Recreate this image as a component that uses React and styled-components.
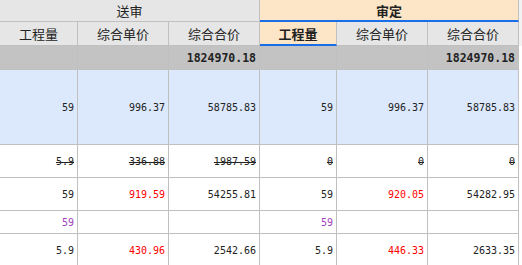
import styled, { createGlobalStyle } from "styled-components";

const GlobalStyle = createGlobalStyle`
  html, body {
    margin: 0;
    padding: 0;
    background: #ffffff;
  }
`;

const colors = {
  GRID: "#c0c0c0",
  HEAD: "#e6e6e6",
  ORANGE: "#fde6c8",
  BLUE_LINE: "#1a6ee8",
  TOTAL: "#c3c3c3",
  SELECTED: "#dce8fc",
  TEXT: "#222222",
  RED: "#ff0000",
  PURPLE: "#a040bc",
};

const rows = [
  { height: 75, selected: true, cells: ["59", "996.37", "58785.83", "59", "996.37", "58785.83"] },
  { height: 33, strike: true, cells: ["5.9", "336.88", "1987.59", "0", "0", "0"] },
  { height: 33, cells: ["59", "919.59", "54255.81", "59", "920.05", "54282.95"], red: [1, 4] },
  { height: 23, cells: ["59", "", "", "59", "", ""], purple: [0, 3] },
  { height: 33, cells: ["5.9", "430.96", "2542.66", "5.9", "446.33", "2633.35"], red: [1, 4] },
];

const widths = [78, 91, 91, 77, 91, 91, 40];

export default function App() {
  return (
    <>
      <GlobalStyle />
      <Wrapper>
        <Table>
          <colgroup>
            {widths.map((w, index) => (
              <col key={index} style={{ width: w }} />
            ))}
          </colgroup>
          <thead>
            <tr style={{ height: 22 }}>
              <GroupHead colSpan={3}>送审</GroupHead>
              <GroupHead colSpan={3} $active>
                审定
              </GroupHead>
              <Filler />
            </tr>
            <tr style={{ height: 24 }}>
              <ColHead>工程量</ColHead>
              <ColHead>综合单价</ColHead>
              <ColHead>综合合价</ColHead>
              <ColHead $active>工程量</ColHead>
              <ColHead>综合单价</ColHead>
              <ColHead>综合合价</ColHead>
              <Filler />
            </tr>
          </thead>
          <tbody>
            <tr style={{ height: 24 }}>
              <TotalCell />
              <TotalCell />
              <TotalCell>1824970.18</TotalCell>
              <TotalCell />
              <TotalCell />
              <TotalCell>1824970.18</TotalCell>
              <BodyFiller />
            </tr>
            {rows.map((row, index) => (
              <tr key={index} style={{ height: row.height }}>
                {row.cells.map((value, i) => (
                  <Cell
                    key={i}
                    $selected={row.selected}
                    $strike={row.strike}
                    $tone={
                      row.red && row.red.includes(i)
                        ? "red"
                        : row.purple && row.purple.includes(i)
                        ? "purple"
                        : "plain"
                    }
                  >
                    {value}
                  </Cell>
                ))}
                <BodyFiller />
              </tr>
            ))}
          </tbody>
        </Table>
      </Wrapper>
    </>
  );
}

const Wrapper = styled.div`
  width: 522px;
  height: 265px;
  overflow: hidden;
`;

const Table = styled.table`
  border-collapse: separate;
  border-spacing: 0;
  table-layout: fixed;
  width: 559px;
  color: ${colors.TEXT};

  td,
  th {
    box-sizing: border-box;
    padding: 0 3px 0 0;
    white-space: nowrap;
    overflow: hidden;
  }
`;

const GroupHead = styled.th`
  background: ${(p) => (p.$active ? colors.ORANGE : colors.HEAD)};
  border-right: 1px solid ${colors.GRID};
  border-bottom: ${(p) =>
    p.$active ? `2px solid ${colors.BLUE_LINE}` : `1px solid ${colors.GRID}`};
  font-family: "Noto Sans CJK SC", "Noto Sans", sans-serif;
  font-size: 13px;
  font-weight: ${(p) => (p.$active ? 700 : 400)};
  text-align: center;
  vertical-align: middle;
  padding: 0 !important;
`;

const ColHead = styled.th`
  background: ${(p) => (p.$active ? colors.ORANGE : colors.HEAD)};
  border-right: 1px solid ${colors.GRID};
  border-bottom: ${(p) =>
    p.$active ? `2px solid ${colors.BLUE_LINE}` : `1px solid ${colors.GRID}`};
  font-family: "Noto Sans CJK SC", "Noto Sans", sans-serif;
  font-size: 13px;
  font-weight: ${(p) => (p.$active ? 700 : 400)};
  text-align: center;
  vertical-align: middle;
  padding: 0 !important;
`;

const Filler = styled.th`
  background: #f2f2f2;
`;

const BodyFiller = styled.td`
  background: #ffffff;
`;

const TotalCell = styled.td`
  background: ${colors.TOTAL};
  border-right: 1px solid ${colors.GRID};
  border-bottom: 1px solid ${colors.GRID};
  font-family: "DejaVu Sans Mono", "Liberation Mono", monospace;
  font-size: 11.5px;
  font-weight: 700;
  text-align: right;
  vertical-align: middle;
`;

const toneColor = {
  plain: colors.TEXT,
  red: colors.RED,
  purple: colors.PURPLE,
};

const Cell = styled.td`
  background: ${(p) => (p.$selected ? colors.SELECTED : "#ffffff")};
  border-right: 1px solid ${colors.GRID};
  border-bottom: 1px solid ${colors.GRID};
  color: ${(p) => toneColor[p.$tone]};
  text-decoration: ${(p) => (p.$strike ? "line-through" : "none")};
  font-family: "DejaVu Sans Mono", "Liberation Mono", monospace;
  font-size: 10px;
  text-align: right;
  vertical-align: middle;
`;
